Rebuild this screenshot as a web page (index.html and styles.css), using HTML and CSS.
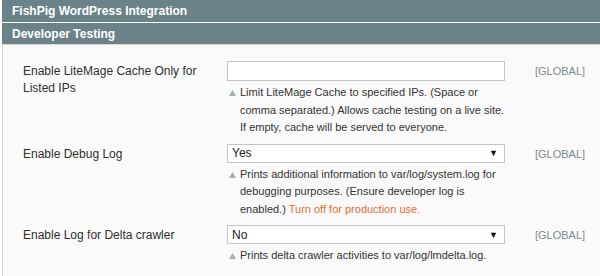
FILE: index.html
```html
<!DOCTYPE html>
<html>
<head>
    <link rel="stylesheet" href="styles.css">
</head>
<body>
<div class="page">
    <div class="section-head">
        <h4>FishPig WordPress Integration</h4>
    </div>
    <div class="section-head">
        <h4>Developer Testing</h4>
    </div>
    <div class="fieldset">
        <div class="row">
            <label class="label">Enable LiteMage Cache Only for Listed IPs</label>
            <div class="value">
                <input class="input-text" type="text">
                <div class="hint">
                    <span class="hint-icon"><svg width="7" height="6" viewBox="0 0 7 6"><polygon points="3.5,0 7,6 0,6" fill="#a3afb2"/></svg></span>
                    <span>Limit LiteMage Cache to specified IPs. (Space or comma separated.) Allows cache testing on a live site. If empty, cache will be served to everyone.</span>
                </div>
            </div>
            <div class="scope">[GLOBAL]</div>
        </div>
        <div class="row">
            <label class="label">Enable Debug Log</label>
            <div class="value">
                <div class="select"><span>Yes</span><span class="arrow">&#9660;</span></div>
                <div class="hint">
                    <span class="hint-icon"><svg width="7" height="6" viewBox="0 0 7 6"><polygon points="3.5,0 7,6 0,6" fill="#a3afb2"/></svg></span>
                    <span>Prints additional information to var/log/system.log for debugging purposes. (Ensure developer log is enabled.) <span class="warn">Turn off for production use.</span></span>
                </div>
            </div>
            <div class="scope">[GLOBAL]</div>
        </div>
        <div class="row">
            <label class="label">Enable Log for Delta crawler</label>
            <div class="value">
                <div class="select"><span>No</span><span class="arrow">&#9660;</span></div>
                <div class="hint">
                    <span class="hint-icon"><svg width="7" height="6" viewBox="0 0 7 6"><polygon points="3.5,0 7,6 0,6" fill="#a3afb2"/></svg></span>
                    <span>Prints delta crawler activities to var/log/lmdelta.log.</span>
                </div>
            </div>
            <div class="scope">[GLOBAL]</div>
        </div>
    </div>
</div>
</body>
</html>
```

FILE: styles.css
```css
*{
    font-family:'Liberation Sans', Arial, sans-serif;
    box-sizing:border-box;
}
body{
    margin:0;
    background:#fff;
}
.page{
    padding-left:2px;
}
.section-head{
    background:#6a8288;
    height:22px;
    padding:0 10px;
    margin-bottom:1px;
    display:flex;
    align-items:center;
}
.section-head + .section-head{
    height:21px;
    margin-bottom:0;
}
h4{
    margin:0;
    color:#fff;
    font-size:12px;
    font-weight:bold;
}
.fieldset{
    background:#fafafa;
    border:1px solid #d6d6d6;
    border-right:none;
    height:240px;
    padding:16px 0 0 20px;
}
.row{
    display:grid;
    grid-template-columns:204px 278px auto;
    margin-bottom:7px;
}
.label{
    font-size:12px;
    line-height:17px;
    color:#2f2f2f;
    padding-top:2px;
    padding-right:20px;
}
.input-text{
    display:block;
    width:278px;
    height:20px;
    margin:0;
    border:1px solid #c5c5c5;
    background:#fff;
}
.select{
    display:flex;
    justify-content:space-between;
    align-items:center;
    height:19px;
    border:1px solid #c5c5c5;
    background:#fff;
    padding:0 6px 0 4px;
    font-size:12px;
    color:#222;
}
.arrow{
    font-size:9px;
    color:#111;
}
.hint{
    display:flex;
    margin-top:3px;
    font-size:11px;
    line-height:17.5px;
    color:#333;
}
.hint-icon{
    flex:none;
    width:13px;
    padding-left:2px;
}
.warn{
    color:#eb6a2e;
}
.scope{
    margin-left:30px;
    font-size:11px;
    color:#7d8a8e;
    padding-top:4px;
}
```
